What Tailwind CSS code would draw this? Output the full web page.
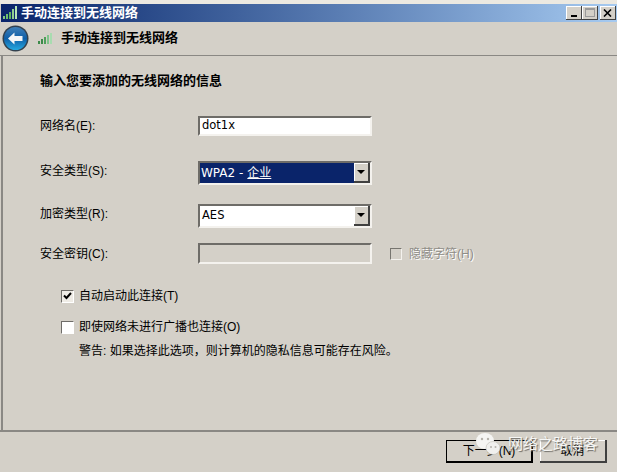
<!DOCTYPE html>
<html lang="zh-CN">
  <head>
    <meta charset="UTF-8" />
    <title>手动连接到无线网络</title>
    <script src="https://cdn.jsdelivr.net/npm/@tailwindcss/browser@4"></script>
  </head>
  <body class="w-[617px] h-[472px] overflow-hidden bg-[#d4d0c8] text-black text-[12px] font-['Liberation_Sans','Noto_Sans_CJK_SC',sans-serif]">
    <div class="h-[472px] flex flex-col">
      <!-- title bar -->
      <div class="h-[4px] bg-[#ece9e1]"></div>
      <div class="h-[18px] ml-px flex items-center bg-gradient-to-r from-[#0a246a] to-[#a6caf0] text-white font-bold text-[13px]">
        <svg class="ml-[2px] mr-[3px]" width="15" height="14" viewBox="0 0 15 14">
          <rect x="0" y="10" width="2" height="3" fill="#7fc97f" />
          <rect x="3" y="8" width="2" height="5" fill="#6fbf6f" />
          <rect x="6" y="6" width="2" height="7" fill="#5fb55f" />
          <rect x="9" y="3" width="2" height="10" fill="#8fd08f" />
          <rect x="12" y="0" width="2" height="13" fill="#b5e5b5" />
        </svg>
        <span>手动连接到无线网络</span>
        <div class="ml-auto mr-px flex">
          <div class="w-[16px] h-[14px] bg-[#d4d0c8] border-r border-b border-[#404040] shadow-[inset_1px_1px_0_#fff] relative">
            <div class="absolute left-[5px] bottom-[2px] w-[6px] h-[2px] bg-black"></div>
          </div>
          <div class="w-[16px] h-[14px] bg-[#d4d0c8] border-r border-b border-[#404040] shadow-[inset_1px_1px_0_#fff] flex items-center justify-center">
            <div class="w-[10px] h-[9px] border border-[#9a9a9a] border-t-2"></div>
          </div>
          <div class="ml-[2px] w-[16px] h-[14px] bg-[#d4d0c8] border-r border-b border-[#404040] shadow-[inset_1px_1px_0_#fff] flex items-center justify-center">
            <svg width="9" height="8" viewBox="0 0 9 8"><path d="M1 0.5 L8 7.5 M8 0.5 L1 7.5" stroke="#000" stroke-width="1.6" /></svg>
          </div>
        </div>
      </div>

      <!-- wizard header -->
      <div class="h-[34px] pb-[1px] flex items-center font-bold text-[13px] border-b border-[#8a8884]">
        <svg class="ml-[2px]" width="27" height="27" viewBox="0 0 27 27">
          <defs>
            <linearGradient id="back" x1="0" y1="0" x2="0" y2="1">
              <stop offset="0" stop-color="#3f7fb8" />
              <stop offset="0.5" stop-color="#0f5fa8" />
              <stop offset="1" stop-color="#25a8e0" />
            </linearGradient>
          </defs>
          <circle cx="13.5" cy="13.5" r="13" fill="#33414e" />
          <circle cx="13.5" cy="13.5" r="11.5" fill="url(#back)" />
          <path d="M6 13.5 L12.5 7.5 V11 H20.5 V16 H12.5 V19.5 Z" fill="#f4f6f8" />
        </svg>
        <svg class="ml-[9px] mr-[8px]" width="15" height="13" viewBox="0 0 15 13">
          <rect x="0" y="9" width="2" height="3" fill="#3d8a4a" />
          <rect x="3" y="7" width="2" height="5" fill="#3d8a4a" />
          <rect x="6" y="5" width="2" height="7" fill="#4f9f5a" />
          <rect x="9" y="3" width="2" height="9" fill="#7fc48a" />
          <rect x="12" y="1" width="2" height="11" fill="#a8dcb0" />
        </svg>
        <span>手动连接到无线网络</span>
      </div>

      <!-- form -->
      <div class="flex-1 ml-px border-l-2 border-[#8a8884] pl-[37px] flex flex-col">
        <h1 class="mt-[18px] h-[14px] leading-[14px] font-bold text-[13px]">输入您要添加的无线网络的信息</h1>

        <div class="mt-[28px] h-[20px] flex items-center">
          <label class="w-[158px]">网络名(E):</label>
          <div class="w-[174px] h-[20px] bg-white border-2 border-[#6e6c68] border-r-[#f4f2ee] border-b-[#f4f2ee] flex items-center pl-[2px] font-['DejaVu_Sans',sans-serif] text-[11.5px]">dot1x</div>
        </div>

        <div class="mt-[25px] h-[24px] flex items-center">
          <label class="w-[158px] pb-[4px]">安全类型(S):</label>
          <div class="w-[174px] h-[24px] bg-white border-2 border-[#6e6c68] border-r-[#f4f2ee] border-b-[#f4f2ee] flex">
            <div class="flex-1 bg-[#0a246a] text-white flex items-center pl-[1px] font-['DejaVu_Sans','Noto_Sans_CJK_SC',sans-serif] text-[12px]">WPA2 - <span class="ml-1 underline">企业</span></div>
            <div class="w-[16px] bg-[#d4d0c8] border-r-2 border-b-2 border-[#404040] shadow-[inset_1px_1px_0_#fff] flex items-center justify-center">
              <div class="border-x-[4px] border-t-[4px] border-x-transparent border-t-black"></div>
            </div>
          </div>
        </div>

        <div class="mt-[19px] h-[24px] flex items-center">
          <label class="w-[158px] pb-[4px]">加密类型(R):</label>
          <div class="w-[174px] h-[24px] bg-white border-2 border-[#6e6c68] border-r-[#f4f2ee] border-b-[#f4f2ee] flex">
            <div class="flex-1 flex items-center pl-[2px] font-['DejaVu_Sans',sans-serif] text-[11.5px]">AES</div>
            <div class="w-[16px] bg-[#d4d0c8] border-r-2 border-b-2 border-[#404040] shadow-[inset_1px_1px_0_#fff] flex items-center justify-center">
              <div class="border-x-[4px] border-t-[4px] border-x-transparent border-t-black"></div>
            </div>
          </div>
        </div>

        <div class="mt-[15px] h-[21px] flex items-center">
          <label class="w-[158px]">安全密钥(C):</label>
          <div class="w-[174px] h-[21px] border-2 border-[#6e6c68] border-r-[#f4f2ee] border-b-[#f4f2ee]"></div>
          <div class="ml-[18px] w-[12px] h-[12px] border border-[#77756f] border-r-[#f4f2ee] border-b-[#f4f2ee]"></div>
          <span class="ml-[7px] text-[#8f8d87] [text-shadow:1px_1px_0_#fff]">隐藏字符(H)</span>
        </div>

        <div class="mt-[25px] ml-[21px] h-[14px] flex items-center">
          <div class="w-[13px] h-[13px] bg-[#efece6] border border-[#6e6c68] border-r-[#fff] border-b-[#fff] flex items-center justify-center">
            <svg width="9" height="8" viewBox="0 0 9 8"><path d="M1 3.5 L3.5 6 L8 1" fill="none" stroke="#000" stroke-width="2" /></svg>
          </div>
          <span class="ml-[5px]">自动启动此连接(T)</span>
        </div>

        <div class="mt-[17px] ml-[21px] h-[14px] flex items-center">
          <div class="w-[13px] h-[13px] bg-white border border-[#6e6c68] border-r-[#fff] border-b-[#fff]"></div>
          <span class="ml-[5px]">即使网络未进行广播也连接(O)</span>
        </div>

        <p class="mt-[9px] ml-[39px] h-[16px] leading-[16px]">警告: 如果选择此选项，则计算机的隐私信息可能存在风险。</p>
      </div>

      <!-- footer -->
      <div class="h-[42px] border-t-2 border-[#8a8884] relative">
        <div class="flex justify-end gap-[7px] pr-[10px] pt-[8px]">
          <div class="w-[87px] h-[23px] border border-black bg-[#d4d0c8] border-r-2 border-b-2 flex items-center justify-center">下一步(N)</div>
          <div class="w-[67px] h-[23px] bg-[#d4d0c8] border-r-2 border-b-2 border-[#404040] shadow-[inset_1px_1px_0_#fff] flex items-center justify-center">取消</div>
        </div>
        <!-- watermark over the buttons -->
        <svg class="absolute left-[475px] top-[0px]" width="28" height="26" viewBox="0 0 28 26">
          <ellipse cx="10" cy="9" rx="9" ry="8" fill="#f5f5f3" />
          <ellipse cx="18" cy="16" rx="7" ry="6.5" fill="#f0f0ee" stroke="#b5b2ab" stroke-width="0.5" />
          <circle cx="7" cy="7" r="1.2" fill="#b5b2ab" />
          <circle cx="13" cy="7" r="1.2" fill="#b5b2ab" />
          <circle cx="16" cy="15" r="1" fill="#b5b2ab" />
          <circle cx="20.5" cy="15" r="1" fill="#b5b2ab" />
        </svg>
        <span class="absolute left-[508px] top-[1px] text-[15px] text-[#f6f6f4] [text-shadow:1px_1px_1px_#6b6964]">网络之路博客</span>
      </div>
    </div>
  </body>
</html>
